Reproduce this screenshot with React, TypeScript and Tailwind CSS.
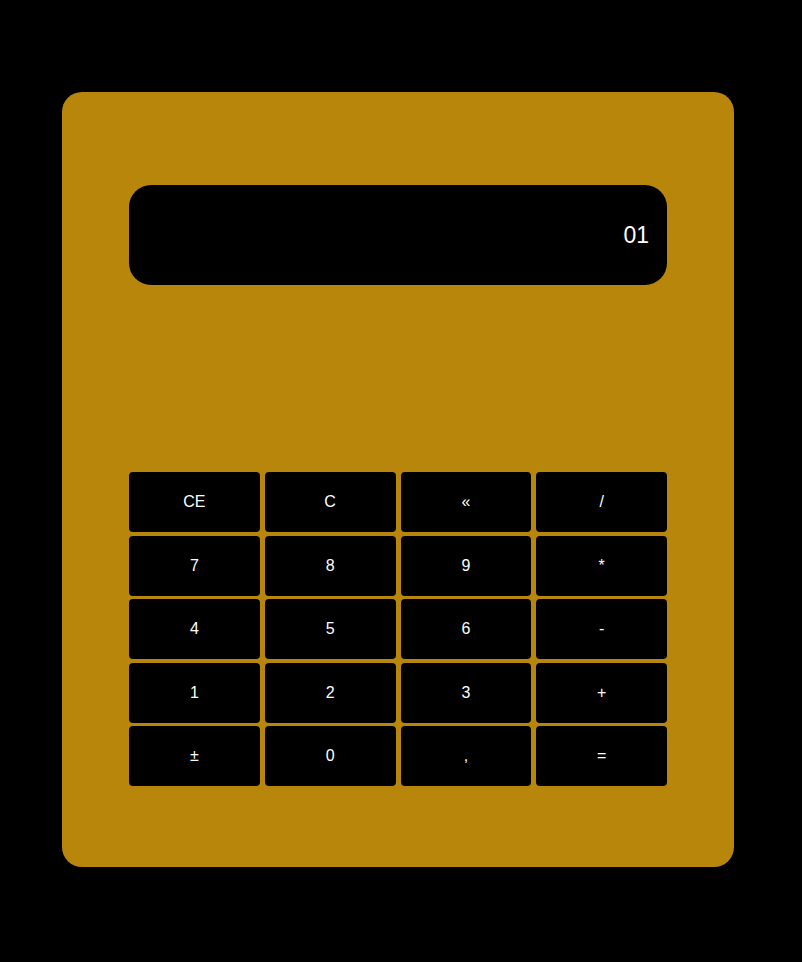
const keys = [
    "CE", "C", "«", "/",
    "7", "8", "9", "*",
    "4", "5", "6", "-",
    "1", "2", "3", "+",
    "±", "0", ",", "=",
];

const App = () => {
    return (
        <div className="min-h-[962px] w-full bg-black pt-[92px] font-['Liberation_Sans',Arial,sans-serif]">
            <div className="ml-[62px] w-[672px] h-[775px] rounded-[20px] bg-[#b8860b] px-[67px] pt-[93px]">
                <div className="h-[100px] rounded-[22px] bg-black flex items-center justify-end pr-[18px]">
                    <span className="text-white text-[23px]">01</span>
                </div>

                <div className="mt-[187px] grid grid-cols-4 gap-x-[5px] gap-y-[3.5px]">
                    {keys.map((k, i) => (
                        <button
                            key={i}
                            className="h-[60px] rounded-[4px] bg-black text-white text-[16px] flex items-center justify-center"
                        >
                            {k}
                        </button>
                    ))}
                </div>
            </div>
        </div>
    );
};

export default App;
